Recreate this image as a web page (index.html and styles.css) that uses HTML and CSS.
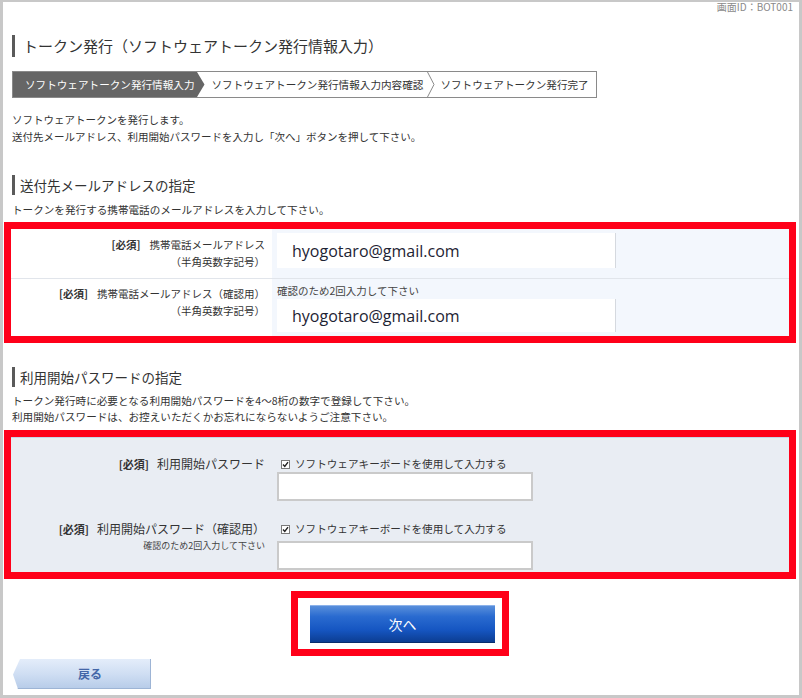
FILE: index.html
```html
<!DOCTYPE html>
<html lang="ja">
<head>
<meta charset="utf-8">
<title>トークン発行（ソフトウェアトークン発行情報入力）</title>
<link rel="stylesheet" href="styles.css">
</head>
<body>
<div class="frame">
  <div class="screen-id">画面ID：BOT001</div>
  <h1 class="page-title">トークン発行（ソフトウェアトークン発行情報入力）</h1>

  <div class="steps">
    <span class="step step-current">ソフトウェアトークン発行情報入力</span>
    <svg class="step-sep" width="8" height="25" viewBox="0 0 8 25"><polygon points="0,0 7.5,12.5 0,25" fill="#666"/></svg>
    <span class="step">ソフトウェアトークン発行情報入力内容確認</span>
    <svg class="step-sep" width="8" height="25" viewBox="0 0 8 25"><polyline points="0.5,0 7,12.5 0.5,25" fill="none" stroke="#8a8a8a" stroke-width="1"/></svg>
    <span class="step step-last">ソフトウェアトークン発行完了</span>
  </div>

  <p class="lead">ソフトウェアトークンを発行します。<br>送付先メールアドレス、利用開始パスワードを入力し「次へ」ボタンを押して下さい。</p>

  <h2 class="sec-title">送付先メールアドレスの指定</h2>
  <p class="sec-desc">トークンを発行する携帯電話のメールアドレスを入力して下さい。</p>

  <div class="hl-box">
    <div class="mail-row">
      <div class="mail-label">
        <p><b>[必須]</b>携帯電話メールアドレス</p>
        <p>（半角英数字記号）</p>
      </div>
      <div class="mail-field">
        <input class="mail-input" type="text" value="hyogotaro@gmail.com">
      </div>
    </div>
    <div class="mail-row mail-row-2">
      <div class="mail-label">
        <p><b>[必須]</b>携帯電話メールアドレス（確認用）</p>
        <p>（半角英数字記号）</p>
      </div>
      <div class="mail-field">
        <p class="mail-note">確認のため2回入力して下さい</p>
        <input class="mail-input" type="text" value="hyogotaro@gmail.com">
      </div>
    </div>
  </div>

  <h2 class="sec-title sec-title-2">利用開始パスワードの指定</h2>
  <p class="sec-desc sec-desc-2">トークン発行時に必要となる利用開始パスワードを4～8桁の数字で登録して下さい。<br>利用開始パスワードは、お控えいただくかお忘れにならないようご注意下さい。</p>

  <div class="hl-box hl-box-2">
    <div class="pw-grid">
      <div class="pw-label"><p><b>[必須]</b>利用開始パスワード</p></div>
      <div class="pw-field">
        <label class="kb-check">
          <svg class="check" width="9" height="9" viewBox="0 0 9 9"><rect x="0.5" y="0.5" width="8" height="8" fill="#fff" stroke="#7a7a7a"/><polyline points="2,4.5 3.8,6.5 7,2.2" fill="none" stroke="#222" stroke-width="1.4"/></svg>
          <span>ソフトウェアキーボードを使用して入力する</span>
        </label>
        <input class="pw-input" type="password">
      </div>
      <div class="pw-label">
        <p><b>[必須]</b>利用開始パスワード（確認用）</p>
        <p class="pw-sub">確認のため2回入力して下さい</p>
      </div>
      <div class="pw-field">
        <label class="kb-check">
          <svg class="check" width="9" height="9" viewBox="0 0 9 9"><rect x="0.5" y="0.5" width="8" height="8" fill="#fff" stroke="#7a7a7a"/><polyline points="2,4.5 3.8,6.5 7,2.2" fill="none" stroke="#222" stroke-width="1.4"/></svg>
          <span>ソフトウェアキーボードを使用して入力する</span>
        </label>
        <input class="pw-input pw-input-2" type="password">
      </div>
    </div>
  </div>

  <div class="next-wrap">
    <button class="btn-next" type="button">次へ</button>
  </div>

  <button class="btn-back" type="button">戻る</button>
</div>
</body>
</html>
```

FILE: styles.css
```css
* {
  box-sizing: border-box;
}

html,
body {
  margin: 0;
  padding: 0;
}

body {
  width: 802px;
  height: 698px;
  overflow: hidden;
  background: #fff;
  color: #333;
  font-family: "Noto Sans CJK JP", "Noto Sans", sans-serif;
}

p {
  margin: 0;
}

.frame {
  height: 698px;
  border: 3px solid #c8c8c8;
  border-top-width: 2px;
  padding: 0 3px 0 1px;
}

.screen-id {
  text-align: right;
  font-size: 10px;
  line-height: 10px;
  color: #8a8a8a;
  padding-right: 3px;
}

.page-title {
  margin: 23px 0 0 8px;
  font-size: 15px;
  font-weight: normal;
  line-height: 22px;
  color: #333;
  border-left: 3px solid #5a5a5a;
  padding-left: 8px;
}

.steps {
  display: flex;
  width: fit-content;
  height: 27px;
  margin: 14px 0 0 8px;
  border: 1px solid #8a8a8a;
  font-size: 10.6px;
  line-height: 25px;
  color: #333;
}

.step {
  white-space: nowrap;
  padding: 0 4px 0 7px;
}

.step-current {
  background: #666;
  color: #fff;
  padding: 0 2px 0 12px;
}

.step-last {
  padding: 0 7px 0 5px;
}

.step-sep {
  display: block;
  flex: none;
}

.lead {
  margin: 13px 0 0 8px;
  font-size: 10.5px;
  line-height: 17px;
}

.sec-title {
  margin: 30px 0 0 8px;
  font-size: 13.5px;
  font-weight: normal;
  line-height: 20px;
  border-left: 3px solid #5a5a5a;
  padding-left: 5px;
}

.sec-title-2 {
  margin-top: 24px;
}

.sec-desc {
  margin: 7px 0 0 8px;
  font-size: 10.6px;
  line-height: 16px;
}

.sec-desc-2 {
  margin-top: 6px;
}

.hl-box {
  margin-top: 4px;
  border: 7px solid #ff0019;
}

.hl-box-2 {
  margin-top: 5px;
}

/* mail table */
.mail-row {
  display: grid;
  grid-template-columns: 261px 1fr;
}

.mail-row-2 {
  border-top: 1px solid #e1e5eb;
}

.mail-label {
  background: #fff;
  text-align: right;
  padding: 7px 7px 0 0;
  font-size: 10.5px;
  line-height: 17px;
}

.mail-label b {
  margin-right: 9px;
}

.mail-row-2 .mail-label {
  padding-top: 6px;
}

.mail-field {
  background: #f3f7fd;
  padding: 4px 0 10px 5px;
}

.mail-row-2 .mail-field {
  padding: 5px 0 4px 5px;
}

.mail-note {
  font-size: 10.5px;
  line-height: 14px;
  color: #444;
}

.mail-input {
  display: block;
  width: 339px;
  height: 35px;
  margin: 0;
  border: none;
  border-right: 1px solid #d5d9df;
  background: #fff;
  padding: 0 0 0 15px;
  font-family: "Open Sans", sans-serif;
  font-size: 16px;
  color: #1d2333;
  outline: none;
}

.mail-row-2 .mail-input {
  margin-top: 1px;
  height: 33px;
}

/* password area */
.pw-grid {
  display: grid;
  grid-template-columns: 261px 1fr;
  row-gap: 20px;
  background: #e9edf3;
  border-top: 1px solid #c6d5e9;
  padding: 18px 0 2px;
}

.pw-label {
  text-align: right;
  padding-right: 7px;
  font-size: 12px;
  line-height: 16px;
}

.pw-label b {
  font-size: 11px;
  margin-right: 8px;
}

.pw-label .pw-sub {
  font-size: 9px;
  line-height: 18px;
  color: #444;
}

.pw-field {
  padding-left: 5px;
}

.kb-check {
  display: flex;
  align-items: center;
  gap: 5px;
  padding-left: 4px;
  font-size: 10.6px;
  line-height: 16px;
}

.check {
  display: block;
  flex: none;
}

.pw-input {
  display: block;
  width: 256px;
  height: 29px;
  margin: 0;
  border: 2px solid #cacaca;
  background: #fff;
  outline: none;
}

.pw-input-2 {
  margin-top: 4px;
}

/* buttons */
.next-wrap {
  width: 218px;
  margin: 12px auto 0;
  border: 7px solid #ff0019;
  padding: 7px 7px 6px 12px;
}

.btn-next {
  display: block;
  width: 185px;
  height: 38px;
  margin: 0;
  padding: 0;
  border: none;
  background: linear-gradient(#5d92dc 0%, #2a6bd0 30%, #1656c2 65%, #0b3b8e 100%);
  box-shadow: inset 0 1px 0 #8cb2ea, inset 0 -1px 0 #082c6c;
  color: #fff;
  font-family: "Noto Sans CJK JP", sans-serif;
  font-size: 14px;
  line-height: 38px;
  text-align: center;
}

.btn-back {
  display: block;
  width: 138px;
  height: 30px;
  margin: 3px 0 0 9px;
  padding: 0 0 0 16px;
  border: none;
  background: linear-gradient(#e4edfa 0%, #cfdef3 50%, #b6cbe8 100%);
  box-shadow: inset -1px -1px 0 #9db4d5;
  clip-path: polygon(7px 0, 100% 0, 100% 100%, 5px 100%, 0 52%);
  color: #4366a8;
  font-family: "Noto Sans CJK JP", sans-serif;
  font-size: 12px;
  font-weight: bold;
  line-height: 30px;
  text-align: center;
}
```
